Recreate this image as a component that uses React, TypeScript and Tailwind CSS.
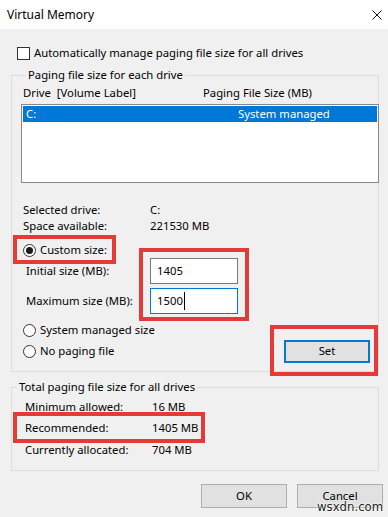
import React from 'react';

function Radio({ checked }: { checked?: boolean }) {
  return (
    <span className="w-[13px] h-[13px] rounded-full border border-[#333] bg-white flex items-center justify-center shrink-0">
      {checked && <span className="w-[7px] h-[7px] rounded-full bg-[#1a1a1a]" />}
    </span>
  );
}

function Row({ label, value, labelPl, valueX }: { label: string; value: string; labelPl: string; valueX: string }) {
  return (
    <div className={`flex h-[16px] leading-[16px] ${labelPl}`}>
      <span className={valueX}>{label}</span>
      <span>{value}</span>
    </div>
  );
}

export default function App() {
  return (
    <div
      className="relative w-[388px] h-[517px] overflow-hidden bg-[#f0f0f0] text-[11.3px] text-black"
      style={{ fontFamily: '"Noto Sans", "Open Sans", sans-serif' }}
    >
      {/* Title bar */}
      <div className="h-[29px] bg-white flex items-center justify-between pl-[7px] pr-[6px]">
        <span className="text-[12px]">Virtual Memory</span>
        <svg width="10" height="10" viewBox="0 0 10 10">
          <path d="M0.5 0.5 L9.5 9.5 M9.5 0.5 L0.5 9.5" stroke="#111" strokeWidth="1" />
        </svg>
      </div>

      {/* Auto manage checkbox */}
      <div className="mt-[16px] h-[16px] flex items-center pl-[17px] gap-[4px]">
        <span className="w-[13px] h-[13px] border border-[#333] bg-white" />
        <span className="leading-[16px]">Automatically manage paging file size for all drives</span>
      </div>

      {/* Paging file size for each drive */}
      <fieldset className="mt-[6px] mx-[11px] w-[368px] min-w-0 border border-[#dcdcdc] px-[9px] pb-[8px]">
        <legend className="ml-[5px] px-[2px] leading-[16px]">Paging file size for each drive</legend>
        <div className="mt-[2px] h-[16px] leading-[16px] flex pl-[2px]">
          <span className="w-[180px]">Drive&nbsp; [Volume Label]</span>
          <span>Paging File Size (MB)</span>
        </div>
        <div className="mt-[3px] w-[358px] h-[79px] border border-[#828790] bg-white p-[1px]">
          <div className="h-[16px] leading-[16px] bg-[#0078d7] text-white flex pl-[3px]">
            <span className="w-[212px]">C:</span>
            <span>System managed</span>
          </div>
        </div>

        <div className="mt-[19px]">
          <Row label="Selected drive:" value="C:" labelPl="pl-[2px]" valueX="w-[127px]" />
          <Row label="Space available:" value="221530 MB" labelPl="pl-[2px]" valueX="w-[127px]" />
        </div>

        <div className="mt-[8px] h-[16px] flex items-center gap-[4px] pl-[2px]">
          <Radio checked />
          <span className="leading-[16px]">Custom size:</span>
        </div>
        <div className="h-[26px] flex items-center pl-[5px]">
          <span className="w-[124px]">Initial size (MB):</span>
          <div className="w-[88px] h-[26px] border border-[#7a7a7a] bg-white pl-[6px] flex items-center">1405</div>
        </div>
        <div className="mt-[4px] h-[26px] flex items-center pl-[5px]">
          <span className="w-[124px]">Maximum size (MB):</span>
          <div className="w-[88px] h-[26px] border border-[#0078d7] bg-white pl-[6px] flex items-center">
            1500<span className="inline-block w-[1px] h-[18px] bg-black ml-[1px]" />
          </div>
        </div>
        <div className="mt-[8px] h-[16px] flex items-center gap-[4px] pl-[2px]">
          <Radio />
          <span className="leading-[16px]">System managed size</span>
        </div>
        <div className="mt-[1px] h-[24px] flex items-center pl-[2px]">
          <Radio />
          <span className="ml-[4px] leading-[16px]">No paging file</span>
          <button className="ml-auto mr-[-1px] w-[86px] h-[23px] border-2 border-[#0078d7] bg-[#e1e1e1] font-normal leading-[16px]">
            Set
          </button>
        </div>
      </fieldset>

      {/* Total paging file size */}
      <fieldset className="mt-[7px] mx-[11px] w-[368px] min-w-0 border border-[#dcdcdc] pb-[12px]">
        <legend className="ml-[5px] px-[2px] leading-[16px]">Total paging file size for all drives</legend>
        <div className="mt-[4px]">
          <Row label="Minimum allowed:" value="16 MB" labelPl="pl-[13px]" valueX="w-[127px]" />
        </div>
        <div className="mt-[5px]">
          <Row label="Recommended:" value="1405 MB" labelPl="pl-[13px]" valueX="w-[127px]" />
        </div>
        <div className="mt-[6px]">
          <Row label="Currently allocated:" value="704 MB" labelPl="pl-[13px]" valueX="w-[127px]" />
        </div>
      </fieldset>

      {/* Dialog buttons */}
      <div className="mt-[13px] flex justify-end gap-[10px] pr-[5px]">
        <button className="w-[86px] h-[24px] border border-[#adadad] bg-[#e1e1e1] font-normal leading-[16px]">OK</button>
        <button className="w-[86px] h-[24px] border border-[#adadad] bg-[#e1e1e1] font-normal leading-[16px]">Cancel</button>
      </div>

      {/* Red annotation boxes */}
      <div className="absolute left-[13px] top-[235px] w-[103px] h-[29px] border-4 border-[#e53a3a]" />
      <div className="absolute left-[139px] top-[248px] w-[110px] h-[73px] border-4 border-[#e53a3a]" />
      <div className="absolute left-[270px] top-[325px] w-[108px] h-[51px] border-4 border-[#e53a3a]" />
      <div className="absolute left-[13px] top-[412px] w-[192px] h-[31px] border-4 border-[#e53a3a]" />

      {/* Watermark */}
      <div
        className="absolute left-[317px] top-[499px] text-[13px] leading-[16px] text-[#222]"
        style={{ fontFamily: '"DejaVu Sans Condensed", "Liberation Sans Narrow", sans-serif', textShadow: '0 0 2px #fff, 0 0 2px #fff, 0 0 2px #fff' }}
      >
        wsxdn.com
      </div>
    </div>
  );
}
